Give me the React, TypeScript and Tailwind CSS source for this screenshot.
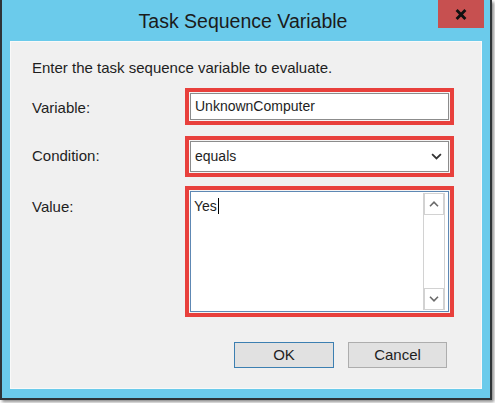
import type { FC, ReactNode } from 'react'

const font = { fontFamily: '"Liberation Sans", Arial, sans-serif' }

const RedMark: FC<{ className?: string; children: ReactNode }> = ({ className = '', children }) => (
  <div className={`border-[4px] border-[#e8403c] p-px bg-[#f4f4f4] ${className}`}>{children}</div>
)

const Chevron: FC<{ up?: boolean; className?: string }> = ({ up, className }) => (
  <svg viewBox="0 0 10 6" className={className} fill="none" stroke="currentColor" strokeWidth="1.6">
    <path d={up ? 'M1 5.2 L5 1.2 L9 5.2' : 'M1 0.8 L5 4.8 L9 0.8'} />
  </svg>
)

const ScrollButton: FC<{ up?: boolean }> = ({ up }) => (
  <div className="flex h-[22px] items-center justify-center border border-[#d2d2d2] bg-white text-[#6a6a6a]">
    <Chevron up={up} className="h-[6px] w-[10px]" />
  </div>
)

const App: FC = () => {
  return (
    <div className="h-[403px] w-[495px] bg-white" style={font}>
      <div className="flex h-[400px] w-[492px] flex-col border-x-2 border-b-2 border-[#2f3437] bg-[#6bcbeb] shadow-[2px_2px_3px_rgba(0,0,0,0.45)]">
        {/* title bar */}
        <div className="flex h-[41px] shrink-0 items-start">
          <div className="flex-1 pt-[7px] pl-[46px] text-center text-[19.5px] text-[#1b1b1b]">
            Task Sequence Variable
          </div>
          <div className="mr-[6px] flex h-[28px] w-[46px] items-center justify-center bg-[#c75050]">
            <svg viewBox="0 0 10 10" className="h-[11px] w-[12px]" stroke="#111" strokeWidth="2.6">
              <path d="M1 1 L9 9 M9 1 L1 9" />
            </svg>
          </div>
        </div>

        {/* client area */}
        <div className="mx-[8px] mb-[9px] flex flex-1 flex-col border border-[#f9f9f9] bg-[#f0f0f0] pt-[16px] pl-[21px] pr-[27px] text-[15px] text-[#1e1e1e]">
          <p className="leading-[20px]">Enter the task sequence variable to evaluate.</p>

          <div className="mt-[10px] grid grid-cols-[153px_1fr] items-center">
            <span className="pt-[3px]">Variable:</span>
            <RedMark className="h-[37px]">
              <div className="flex h-full items-center border border-[#8c8c8c] bg-white pl-[4px] text-[14px]">
                UnknownComputer
              </div>
            </RedMark>
          </div>

          <div className="mt-[11px] grid grid-cols-[153px_1fr] items-center">
            <span>Condition:</span>
            <RedMark className="h-[41px]">
              <div className="flex h-full items-center justify-between border border-[#8c8c8c] bg-white pr-[6px] pl-[4px] text-[14px]">
                <span>equals</span>
                <Chevron className="h-[7px] w-[11px] text-[#333]" />
              </div>
            </RedMark>
          </div>

          <div className="mt-[9px] grid grid-cols-[153px_1fr] items-start">
            <span className="pt-[10px]">Value:</span>
            <RedMark className="h-[131px]">
              <div className="flex h-full border border-[#5e88b4] bg-white">
                <div className="flex-1 pt-[3px] pl-[3px] text-[14px]">
                  Yes<span className="ml-px inline-block h-[16px] w-px translate-y-[3px] bg-black" />
                </div>
                <div className="my-px mr-[3px] flex w-[22px] flex-col justify-between border-x border-[#d2d2d2]">
                  <ScrollButton up />
                  <ScrollButton />
                </div>
              </div>
            </RedMark>
          </div>

          <div className="mt-[25px] flex justify-end gap-[14px] pr-[7px]">
            <button className="h-[26px] w-[100px] border border-[#3c7fb1] bg-[#e1e1e1] text-[15px]">OK</button>
            <button className="h-[26px] w-[99px] border border-[#adadad] bg-[#e1e1e1] text-[15px]">Cancel</button>
          </div>
        </div>
      </div>
    </div>
  )
}

export default App
